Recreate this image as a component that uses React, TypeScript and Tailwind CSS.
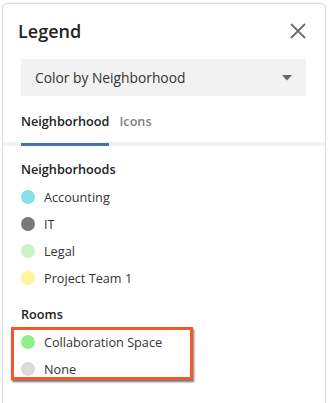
import React from "react";

const neighborhoods = [
  { name: "Accounting", color: "bg-[#84e1ea]" },
  { name: "IT", color: "bg-[#7a7a7a]" },
  { name: "Legal", color: "bg-[#cdf0cd]" },
  { name: "Project Team 1", color: "bg-[#fdf59c]" },
];

const rooms = [
  { name: "Collaboration Space", color: "bg-[#8df28d]" },
  { name: "None", color: "bg-[#dcdcdc]" },
];

function Row({ name, color }: { name: string; color: string }) {
  return (
    <div className="flex h-[27px] items-center gap-[9px]">
      <span className={`h-[14px] w-[14px] shrink-0 rounded-full ${color}`} />
      <span className="text-[12.7px] leading-[20px] text-[#333333]">{name}</span>
    </div>
  );
}

export default function App() {
  return (
    <div
      className="h-[403px] w-[330px] overflow-hidden bg-white pl-[2px] pt-[3px]"
      style={{ fontFamily: '"Open Sans", "Liberation Sans", sans-serif' }}
    >
      <div className="h-[420px] w-[324px] rounded-t-[6px] border border-[#dedede] bg-white shadow-[0_0_3px_rgba(0,0,0,0.08)]">
        <div className="px-[18px] pt-[13px]">
          <div className="flex h-[28px] items-center justify-between">
            <span className="-ml-[3px] text-[18px] font-semibold leading-[28px] text-[#222222]">
              Legend
            </span>
            <svg width="16" height="16" viewBox="0 0 16 16" className="mr-[1px]">
              <path d="M1.5 1.5 L14.5 14.5 M14.5 1.5 L1.5 14.5" stroke="#6b6b6b" strokeWidth="1.8" strokeLinecap="round" />
            </svg>
          </div>
          <div className="mt-[14px] flex h-[37px] w-[285px] items-center justify-between bg-[#f2f2f2] pl-[14px] pr-[14px]">
            <span className="text-[13.8px] leading-[20px] text-[#333333]">Color by Neighborhood</span>
            <svg width="10" height="6" viewBox="0 0 10 6">
              <path d="M0 0 L10 0 L5 5.5 Z" fill="#666666" />
            </svg>
          </div>
          <div className="mt-[15px] flex gap-[10px] pb-[11px]">
            <span className="text-[12.7px] font-semibold leading-[20px] text-[#222222]">Neighborhood</span>
            <span className="text-[12.7px] font-semibold leading-[20px] text-[#808080]">Icons</span>
          </div>
        </div>
        <div className="flex h-[4px] items-end bg-[#f2f2f2] pl-[18px]">
          <div className="h-[3px] w-[88px] bg-[#4a70ad]" />
        </div>
        <div className="px-[18px] pt-[13px]">
          <div className="text-[12.7px] font-semibold leading-[20px] text-[#222222]">Neighborhoods</div>
          <div className="mt-[4px] flex flex-col">
            {neighborhoods.map((n) => (
              <Row key={n.name} {...n} />
            ))}
          </div>
          <div className="mt-[13px] text-[12.7px] font-semibold leading-[20px] text-[#222222]">Rooms</div>
          <div className="relative mt-[4px] flex flex-col">
            {rooms.map((n) => (
              <Row key={n.name} {...n} />
            ))}
            <div className="pointer-events-none absolute -left-[10px] -top-[1px] bottom-[2px] w-[182px] border-[3px] border-[#ef5a2b] shadow-[1px_2px_2px_rgba(0,0,0,0.55)]" />
          </div>
        </div>
      </div>
    </div>
  );
}
